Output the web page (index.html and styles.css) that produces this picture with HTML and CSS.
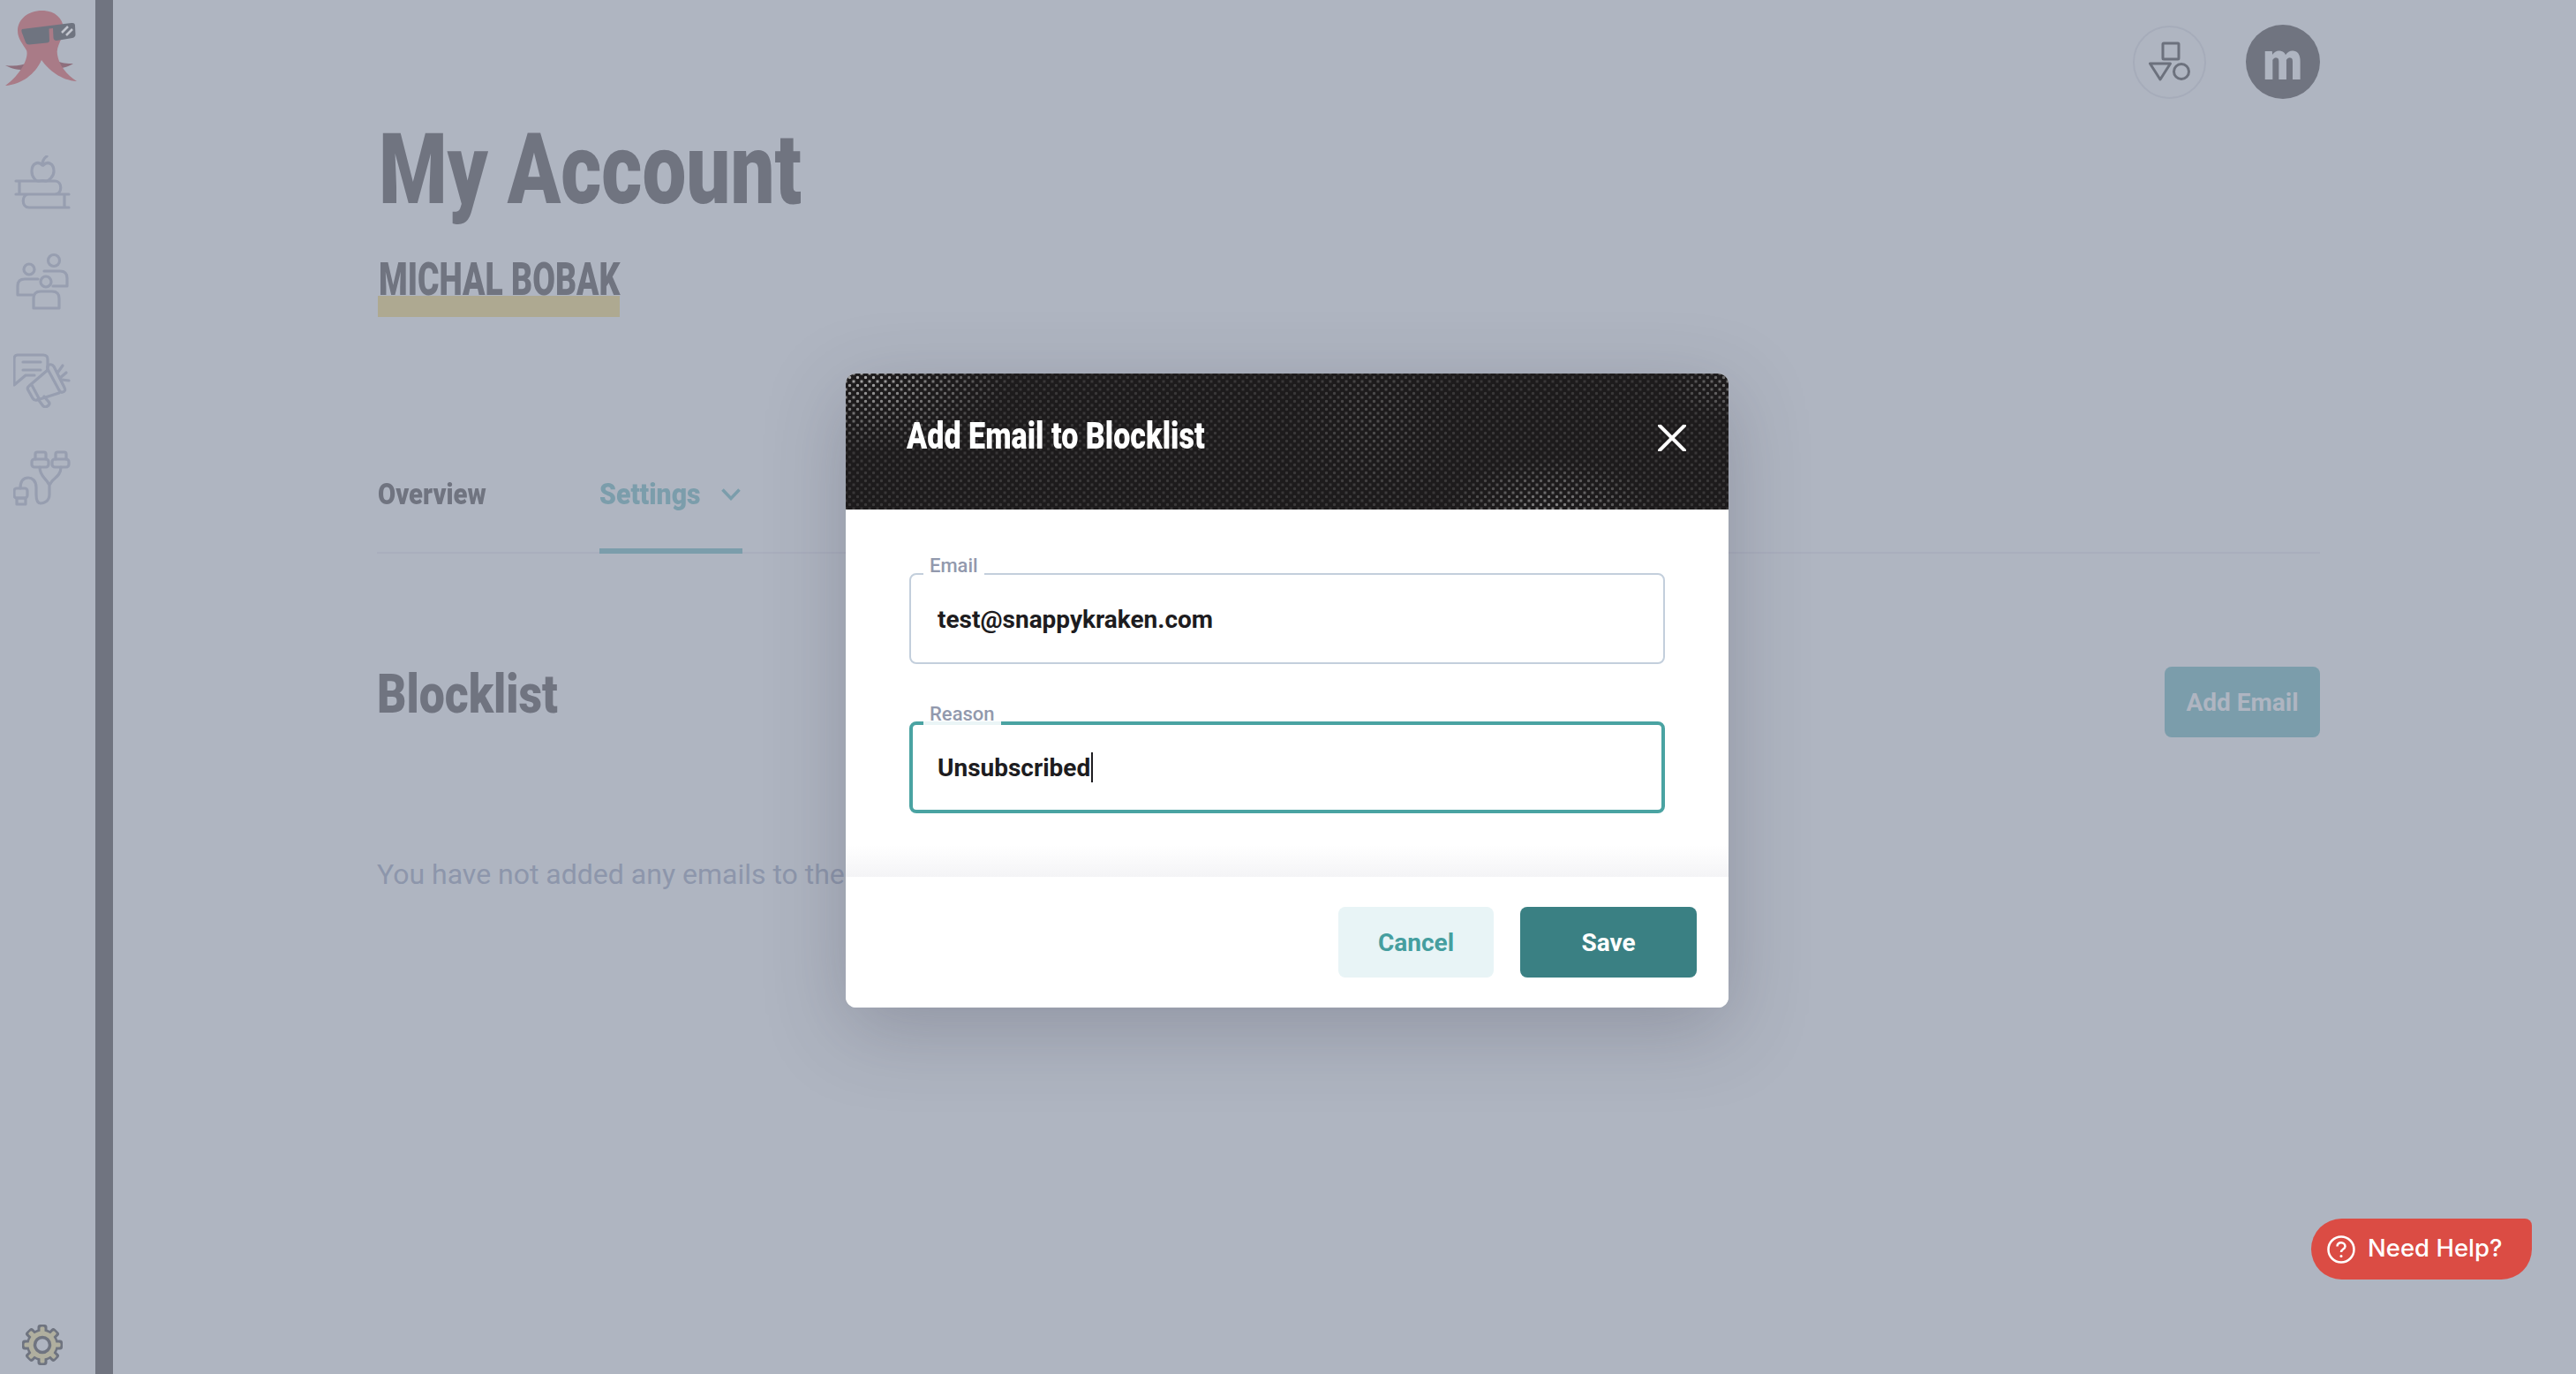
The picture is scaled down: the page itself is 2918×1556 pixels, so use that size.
FILE: index.html
```html
<!DOCTYPE html>
<html lang="en">
<head>
<meta charset="utf-8">
<title>My Account</title>
<link rel="stylesheet" href="styles.css">
</head>
<body>
<div class="app">
  <nav class="sidebar">
    <svg class="logo" viewBox="0 0 108 108" width="108" height="108">
      <path class="logo-back" d="M6 74C15 75 24 75 34 70L38 79C26 80 15 79 6 74Z"/>
      <path class="logo-back" d="M83 72C76 72 70 72 62 68L60 78C69 78 76 76 83 72Z"/>
      <path class="logo-body" d="M50 12C33 11 20 21 20 35C20 44 26 50 30 57C33 65 24 84 6 97C24 96 40 84 47 68C55 79 69 91 87 92C75 84 67 74 65 62C63 52 72 44 72 32C71 20 62 13 50 12Z"/>
      <path class="logo-glass" d="M25 33L81 26Q85 25.500 85 29L85.500 39Q85.500 42 82 43L64 46Q61 46 60.500 43L60 32L55.500 32.500L56 46Q56 48 53 48.500L33 50.500Q30 50.500 29 48L24.500 36Q24 33.500 25 33Z"/>
      <path class="logo-shine" d="M70 37L77 30M75 40L82 33"/>
    </svg>
    <div class="nav-icons">
      <svg class="nav-icon" viewBox="0 0 64 62" width="64" height="62">
        <path d="M32 11C27 6 20 9 20 18C20 25 25 29 27 29C30 29 33 28 36 29C39 29 45 24 45 18C45 9 38 6 33 11M37 1C34 3 32 6 32 11"/>
        <path d="M2 29H46C55 29 55 44 46 44H2M6 29V44M62 44H17C8 44 8 59 17 59H62M57 44V59M2 44H62"/>
      </svg>
      <svg class="nav-icon" viewBox="0 0 64 68" width="64" height="68">
        <circle cx="45" cy="11" r="6.500"/><circle cx="17" cy="21" r="6"/><circle cx="36" cy="35" r="6"/>
        <path d="M27 32H12Q4 32 4 40V50H21M34 23H52Q60 23 60 31V40H44M22 65V54Q22 46 30 46H43Q51 46 51 54V65Z"/>
      </svg>
      <svg class="nav-icon" viewBox="0 0 66 64" width="66" height="64">
        <path d="M39 19V9Q39 4 34 4H5Q1 4 1 9V38L14 27H24M11 12H31M11 21H31"/>
        <path d="M41 15Q44 14 46 17L58 41Q60 45 56 46Q54 47 52 44L39 20Q38 16 41 15Z"/>
        <path d="M39 21L18 39Q15 41 17 44L22 53Q24 56 27 55L52 47M21 38L29 53"/>
        <path d="M28 54L34 62Q37 64 40 61Q42 59 40 57L35 51"/>
        <path d="M51 23L56 16M53 30L60 24M55 32L63 33"/>
      </svg>
      <svg class="nav-icon" viewBox="0 0 66 66" width="66" height="66">
        <path d="M25 12V6Q25 4 27 4H35Q37 4 37 6V12M48 12V6Q48 4 50 4H58Q60 4 60 6V12"/>
        <rect x="21" y="12" width="19" height="9" rx="3"/><rect x="44" y="12" width="19" height="9" rx="3"/>
        <path d="M30 21C30 32 38 34 40 40M54 21C54 32 44 34 42 40M41 40V52C41 60 34 62 31 62C27 62 26 58 26 52V44C26 36 21 33 17 33C12 33 8 36 8 45"/>
        <rect x="1" y="45" width="15" height="11" rx="3"/><rect x="4" y="56" width="10" height="7"/>
      </svg>
    </div>
    <svg class="gear" viewBox="0 0 48 48" width="48" height="48">
      <g class="gear-dark">
        <rect x="18.500" y="1" width="11" height="46" rx="3"/>
        <rect x="18.500" y="1" width="11" height="46" rx="3" transform="rotate(45 24 24)"/>
        <rect x="18.500" y="1" width="11" height="46" rx="3" transform="rotate(90 24 24)"/>
        <rect x="18.500" y="1" width="11" height="46" rx="3" transform="rotate(135 24 24)"/>
        <circle cx="24" cy="24" r="18"/>
      </g>
      <g class="gear-light">
        <rect x="21.500" y="3.500" width="5" height="41" rx="1.500"/>
        <rect x="21.500" y="3.500" width="5" height="41" rx="1.500" transform="rotate(45 24 24)"/>
        <rect x="21.500" y="3.500" width="5" height="41" rx="1.500" transform="rotate(90 24 24)"/>
        <rect x="21.500" y="3.500" width="5" height="41" rx="1.500" transform="rotate(135 24 24)"/>
        <circle cx="24" cy="24" r="15.500"/>
      </g>
      <circle class="gear-hole" cx="24" cy="24" r="8.500"/>
    </svg>
  </nav>
  <div class="divider"></div>
  <main class="main">
    <div class="topbar">
      <div class="shapes-btn">
        <svg viewBox="0 0 48 48" width="48" height="48">
          <rect x="16" y="3" width="18" height="18" rx="1"/>
          <path d="M1.500 26H24.500L13 44Z"/>
          <circle cx="37" cy="35" r="8.500"/>
        </svg>
      </div>
      <div class="avatar"><span class="avatar-letter">m</span></div>
    </div>
    <h1 class="title"><span class="narrow title-text">My Account</span></h1>
    <div class="name"><span class="narrow name-text">MICHAL BOBAK</span></div>
    <div class="tabs">
      <span class="tab tab-first"><span class="narrow tab-over">Overview</span></span>
      <span class="tab tab-active">
        <span class="narrow tab-set">Settings</span>
        <svg class="chev" viewBox="0 0 22 14" width="22" height="14"><path d="M1.500 1.500L11 11.500L20.500 1.500"/></svg>
      </span>
    </div>
    <div class="section-head">
      <h2 class="section-title"><span class="narrow section-text">Blocklist</span></h2>
      <button class="btn-add">Add Email</button>
    </div>
    <p class="empty">You have not added any emails to the blocklist yet.</p>
  </main>
</div>

<section class="modal">
  <header class="modal-head">
    <h3 class="modal-title"><span class="narrow modal-text">Add Email to Blocklist</span></h3>
    <svg class="close" viewBox="0 0 32 30" width="32" height="30"><path d="M2 1L30 29M30 1L2 29"/></svg>
  </header>
  <div class="modal-body">
    <div class="field field-email">
      <label class="field-label">Email</label>
      <div class="field-value">test@snappykraken.com</div>
    </div>
    <div class="field field-focus">
      <label class="field-label">Reason</label>
      <div class="field-value">Unsubscribed<span class="caret"></span></div>
    </div>
  </div>
  <footer class="modal-foot">
    <button class="btn btn-cancel">Cancel</button>
    <button class="btn btn-save">Save</button>
  </footer>
</section>

<button class="help">
  <svg viewBox="0 0 32 32" width="32" height="32">
    <circle cx="16" cy="16" r="14.500"/>
    <path d="M11.500 12.500C11.500 6.500 20.500 7 20.500 12.500C20.500 15.500 16 15.500 16 19"/>
    <circle class="dot" cx="16" cy="23.500" r="1.500"/>
  </svg>
  <span class="help-text">Need Help?</span>
</button>
</body>
</html>
```
FILE: styles.css
```css
* { box-sizing: border-box; }
html, body { margin: 0; padding: 0; height: 100%; }
body {
  width: 2918px; height: 1556px; overflow: hidden; position: relative;
  background: #afb5c1; font-family: Roboto, "Liberation Sans", sans-serif; color: #707480;
}
.app { display: flex; height: 100%; }

/* condensed display text */
.narrow { display: inline-block; font-family: Roboto, sans-serif; font-weight: 900; transform-origin: 0 50%; white-space: nowrap; }
.title-text { transform: scaleX(.792); margin-left: 2px; }
.name-text { transform: scaleX(.718); }
.tab-over { transform: scaleX(.86); }
.tab-set { transform: scaleX(.89); }
.section-text { transform: scaleX(.835); }
.modal-text { transform: scaleX(.812); }

/* sidebar */
.sidebar { width: 108px; flex: none; display: flex; flex-direction: column; align-items: center; padding-right: 12px; }
.logo { display: block; flex: none; align-self: flex-start; }
.logo-body { fill: #a97b87; }
.logo-back { fill: #8e6f7d; }
.logo-glass { fill: #6f7480; }
.logo-shine { fill: none; stroke: #c3c6ce; stroke-width: 2.500; }
.nav-icons { display: flex; flex-direction: column; align-items: center; padding-top: 68px; }
.nav-icon { display: block; fill: none; stroke: #979eb0; stroke-width: 3.200; stroke-linejoin: round; stroke-linecap: round; margin-bottom: 46px; }
.gear { margin-top: auto; margin-bottom: 9px; flex: none; }
.gear-dark { fill: #6f7480; }
.gear-light { fill: #b0af9f; }
.gear-hole { fill: #afb5c1; stroke: #6f7480; stroke-width: 3.500; }
.divider { width: 20px; flex: none; background: #707480; }

/* main */
.main { flex: 1; padding: 28px 290px 0 299px; min-width: 0; }
.topbar { display: flex; justify-content: flex-end; align-items: center; gap: 45px; height: 84px; }
.shapes-btn { width: 83px; height: 83px; border: 2px solid #a6acba; border-radius: 50%; display: flex; align-items: center; justify-content: center; }
.shapes-btn svg { fill: none; stroke: #6c717d; stroke-width: 3; stroke-linejoin: round; }
.avatar { width: 84px; height: 84px; border-radius: 50%; background: #707480; color: #afb5c1; display: flex; align-items: center; justify-content: center; padding-bottom: 2px; }
.avatar-letter { font: 900 62px/84px Roboto, sans-serif; transform: scaleX(.84); }

.title { margin: 22px 0 0; font-size: 112px; line-height: 116px; font-weight: 900; color: #707480; }
.name { margin: 41px 0 0 1px; padding-left: 1px; width: 274px; height: 68px; font-size: 52px; line-height: 52px; background: linear-gradient(transparent 44px, #aea991 44px); }

.tabs { margin-top: 178px; display: flex; align-items: flex-start; gap: 129px; height: 90px; border-bottom: 2px solid #a9aebd; }
.tab { font-size: 34px; line-height: 44px; height: 90px; display: flex; }
.tab-first { width: 123px; padding-left: 1px; }
.tab-active { width: 162px; color: #7b9dab; border-bottom: 6px solid #7b9dab; }
.tab-set { width: 138px; flex: none; }
.chev { margin-top: 16px; flex: none; fill: none; stroke: #7b9dab; stroke-width: 3.500; }

.section-head { display: flex; justify-content: space-between; margin-top: 127px; align-items: flex-start; height: 81px; }
.section-title { margin: 0; font-size: 62px; line-height: 64px; }
.btn-add { margin-top: 1px; width: 176px; height: 80px; border: 0; border-radius: 8px; background: #7b9dab; color: #afb5c1; font: 700 28px Roboto, sans-serif; }
.empty { margin: 135px 0 0; font-size: 32px; line-height: 40px; color: #8d96ab; white-space: nowrap; }

/* modal */
.modal { position: absolute; left: 958px; top: 423px; width: 1000px; height: 718px; background: #fff; border-radius: 12px; box-shadow: 0 24px 90px rgba(50, 50, 70, .25); overflow: hidden; display: flex; flex-direction: column; }
.modal-head { position: relative; height: 154px; flex: none; background-color: #1d1b1c; display: flex; justify-content: space-between; align-items: flex-start; padding: 49px 48px 0 69px; overflow: hidden; }
.modal-head::before { content: ""; position: absolute; inset: 0; background-image: radial-gradient(circle, #fff 1.300px, transparent 2.100px), radial-gradient(circle, #fff 1.300px, transparent 2.100px); background-size: 9px 9px; background-position: 0 0, 4.500px 4.500px; -webkit-mask-image: radial-gradient(ellipse 170px 90px at 20px 0, rgba(0,0,0,.6), transparent), radial-gradient(ellipse 120px 60px at 800px 154px, rgba(0,0,0,.4), transparent), radial-gradient(ellipse 70px 45px at 1000px 10px, rgba(0,0,0,.3), transparent), radial-gradient(ellipse 90px 110px at 600px 50px, rgba(0,0,0,.12), transparent), linear-gradient(rgba(0,0,0,.13), rgba(0,0,0,.13)); }
.modal-title { position: relative; margin: 0; font-size: 42px; line-height: 44px; color: #fff; }
.close { position: relative; margin-top: 9px; fill: none; stroke: #fff; stroke-width: 4; stroke-linecap: round; }
.modal-body { flex: 1; padding: 72px 72px 0; display: flex; flex-direction: column; gap: 65px; background: linear-gradient(#fff 380px, #f4f4f6 100%); }
.field { position: relative; height: 104px; border: 2px solid #c3cfdc; border-radius: 8px; padding: 0 30px; display: flex; align-items: center; background: #fff; }
.field-email { height: 103px; padding-top: 1px; }
.field-label { position: absolute; left: 14px; top: -20px; padding: 0 7px; height: 20px; font-size: 22px; line-height: 20px; font-weight: 500; color: #9299ad; background: linear-gradient(transparent 18px, #fff 18px); }
.field-focus { border: 4px solid #4aa3a2; padding: 0 28px; }
.field-focus .field-label { left: 12px; top: -22px; height: 22px; background: linear-gradient(transparent 18px, #eaf5f6 18px); }
.field-value { font-size: 28px; font-weight: 700; color: #1d1c20; position: relative; }
.caret { position: absolute; right: -3px; top: -1px; width: 2px; height: 34px; background: #1d1c20; }
.modal-foot { flex: none; height: 148px; padding: 34px 36px 0 0; display: flex; justify-content: flex-end; gap: 30px; background: #fff; }
.btn { height: 80px; border: 0; border-radius: 8px; font: 700 28px Roboto, sans-serif; }
.btn-cancel { width: 176px; background: #e8f4f6; color: #459e9f; }
.btn-save { width: 200px; background: #3a8083; color: #fff; }

/* help */
.help { position: absolute; left: 2618px; top: 1380px; width: 250px; height: 69px; border: 0; background: #db4c44; border-radius: 35px 8px 35px 35px; color: #fff; display: flex; align-items: center; gap: 14px; padding: 0 0 0 18px; font: 500 27.500px Inter, sans-serif; }
.help-text { padding-bottom: 3px; }
.help svg { fill: none; stroke: #fff; stroke-width: 2.500; }
.help .dot { fill: #fff; stroke: none; }
```
